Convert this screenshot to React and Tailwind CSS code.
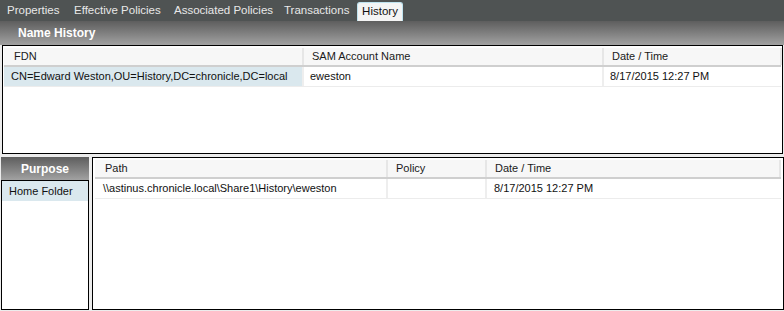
const font = { fontFamily: '"Liberation Sans", Arial, sans-serif' };

const tabs = [
  { label: "Properties", w: "w-[67px]" },
  { label: "Effective Policies", w: "w-[100px]" },
  { label: "Associated Policies", w: "w-[110px]" },
  { label: "Transactions", w: "w-[78px]" },
];

function HeaderRow({ cols }) {
  return (
    <div className="flex h-[19px] bg-[#f7f7f7] border-b-2 border-[#cfcfcf] text-[11px] text-[#1a1a1a]">
      {cols.map((c, i) => (
        <div
          key={i}
          className={`${c.w} flex items-center border-r-2 border-[#e6e6e6] shrink-0 whitespace-nowrap`}
          style={{ paddingLeft: c.pl }}
        >
          {c.label}
        </div>
      ))}
      <div className="flex-1" />
    </div>
  );
}

export default function App() {
  return (
    <div className="w-[784px] h-[311px] bg-[#ececec] flex flex-col overflow-hidden" style={font}>
      {/* tab bar */}
      <div className="h-[21px] bg-[#4f5353] flex items-end pl-[2px] shrink-0">
        {tabs.map((t) => (
          <div key={t.label} className={`${t.w} h-[21px] pl-[5px] flex items-center text-[11.5px] text-[#e8e8e8] whitespace-nowrap`}>
            {t.label}
          </div>
        ))}
        <div className="h-[19px] w-[46px] flex items-center justify-center text-[11.5px] text-[#111] bg-[#f4f4f4] border border-b-0 border-[#bfe3ef] rounded-t-[3px]">
          History
        </div>
      </div>

      {/* Name History */}
      <div className="h-[24px] shrink-0 bg-gradient-to-b from-[#5e5e5e] to-[#a2a2a2] flex items-center pl-[18px] text-[12px] font-bold text-white">
        Name History
      </div>
      <div className="h-[109px] shrink-0 mr-[1px] ml-[2px] bg-white border border-black pt-[2px] px-[1px]">
        <HeaderRow
          cols={[
            { label: "FDN", w: "w-[300px]", pl: 10 },
            { label: "SAM Account Name", w: "w-[300px]", pl: 8 },
            { label: "Date / Time", w: "w-[178px]", pl: 8 },
          ]}
        />
        <div className="flex h-[20px] border-b border-[#ececec] text-[11px] text-[#111] whitespace-nowrap">
          <div className="w-[300px] shrink-0 bg-[#dae8ee] flex items-center pl-[7px] border-r-2 border-[#eeeeee]">
            CN=Edward Weston,OU=History,DC=chronicle,DC=local
          </div>
          <div className="w-[300px] shrink-0 flex items-center pl-[6px] border-r-2 border-[#eeeeee]">eweston</div>
          <div className="flex-1 flex items-center pl-[6px]">8/17/2015 12:27 PM</div>
        </div>
      </div>

      {/* bottom section */}
      <div className="flex-1 flex mt-[3px] pb-[1px]">
        <div className="w-[88px] shrink-0 ml-[1px] flex flex-col">
          <div className="h-[23px] shrink-0 bg-gradient-to-b from-[#5e5e5e] to-[#a2a2a2] flex items-center justify-center text-[12px] font-bold text-white">
            Purpose
          </div>
          <div className="flex-1 bg-white border border-black">
            <div className="h-[20px] bg-[#dae8ee] flex items-center pl-[7px] text-[11px] text-[#111]">
              Home Folder
            </div>
          </div>
        </div>
        <div className="flex-1 ml-[3px] mr-[1px] bg-white border border-black pt-[2px] px-[2px]">
          <HeaderRow
            cols={[
              { label: "Path", w: "w-[293px]", pl: 10 },
              { label: "Policy", w: "w-[99px]", pl: 8 },
              { label: "Date / Time", w: "w-[294px]", pl: 8 },
            ]}
          />
          <div className="flex h-[20px] border-b border-[#ececec] text-[11px] text-[#111] whitespace-nowrap">
            <div className="w-[293px] shrink-0 flex items-center pl-[8px] border-r-2 border-[#eeeeee]">
              {"\\\\astinus.chronicle.local\\Share1\\History\\eweston"}
            </div>
            <div className="w-[99px] shrink-0 border-r-2 border-[#eeeeee]" />
            <div className="flex-1 flex items-center pl-[7px]">8/17/2015 12:27 PM</div>
          </div>
        </div>
      </div>
    </div>
  );
}
